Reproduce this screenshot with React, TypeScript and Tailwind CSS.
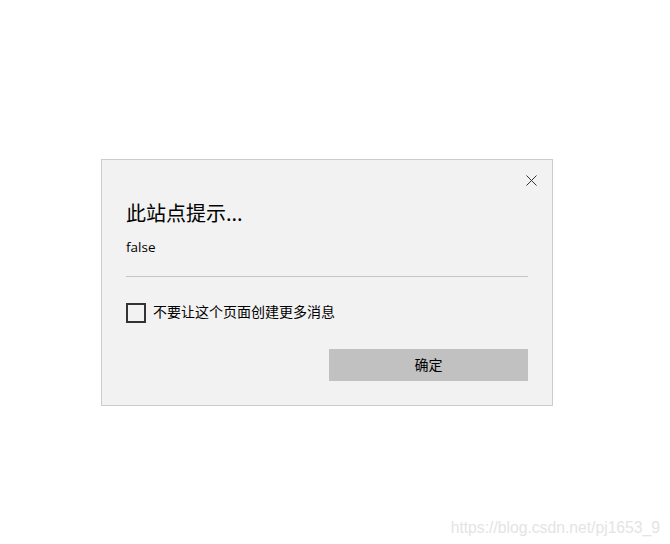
const cjk = "font-['Noto_Sans_CJK_SC','Noto_Sans',sans-serif]";

const CloseIcon = () => (
  <svg width="11" height="11" viewBox="0 0 11 11" className="text-[#333333]">
    <path d="M0.5 0.5 L10.5 10.5 M10.5 0.5 L0.5 10.5" stroke="currentColor" strokeWidth="1" fill="none" />
  </svg>
);

const App = () => {
  return (
    <div className={`flex h-[544px] w-[670px] flex-col bg-white ${cjk}`}>
      <div className="pl-[101px] pt-[159px]">
        <div className="flex h-[247px] w-[452px] flex-col border border-[#cccccc] bg-[#f2f2f2] px-[24px]">
          <div className="-mr-[9px] flex h-[40px] items-center justify-end">
            <CloseIcon />
          </div>
          <h1 className="-mt-px text-[20px] leading-[28px] font-normal text-black">此站点提示...</h1>
          <p className="mt-[10px] text-[13.5px] leading-[20px] text-black font-['Open_Sans','Noto_Sans_CJK_SC',sans-serif]">
            false
          </p>
          <div className="mt-[19px] h-px bg-[#c6c6c6]" />
          <label className="mt-[26px] flex h-[20px] items-center gap-[7px]">
            <span className="h-[20px] w-[20px] border-2 border-[#333333]" />
            <span className="-translate-y-[2px] text-[14px] leading-[20px] text-black">不要让这个页面创建更多消息</span>
          </label>
          <div className="mt-[26px] flex justify-end">
            <button className="h-[32px] w-[199px] bg-[#c1c1c1] pb-[2px] text-[14px] text-black">确定</button>
          </div>
        </div>
      </div>
      <div className="mt-auto flex justify-end pb-[6px] pr-[10px]">
        <span className="text-[15.7px] leading-[20px] text-[#e4e4e4] font-['Liberation_Sans',Arial,sans-serif]">
          https://blog.csdn.net/pj1653_9
        </span>
      </div>
    </div>
  );
};

export default App;
